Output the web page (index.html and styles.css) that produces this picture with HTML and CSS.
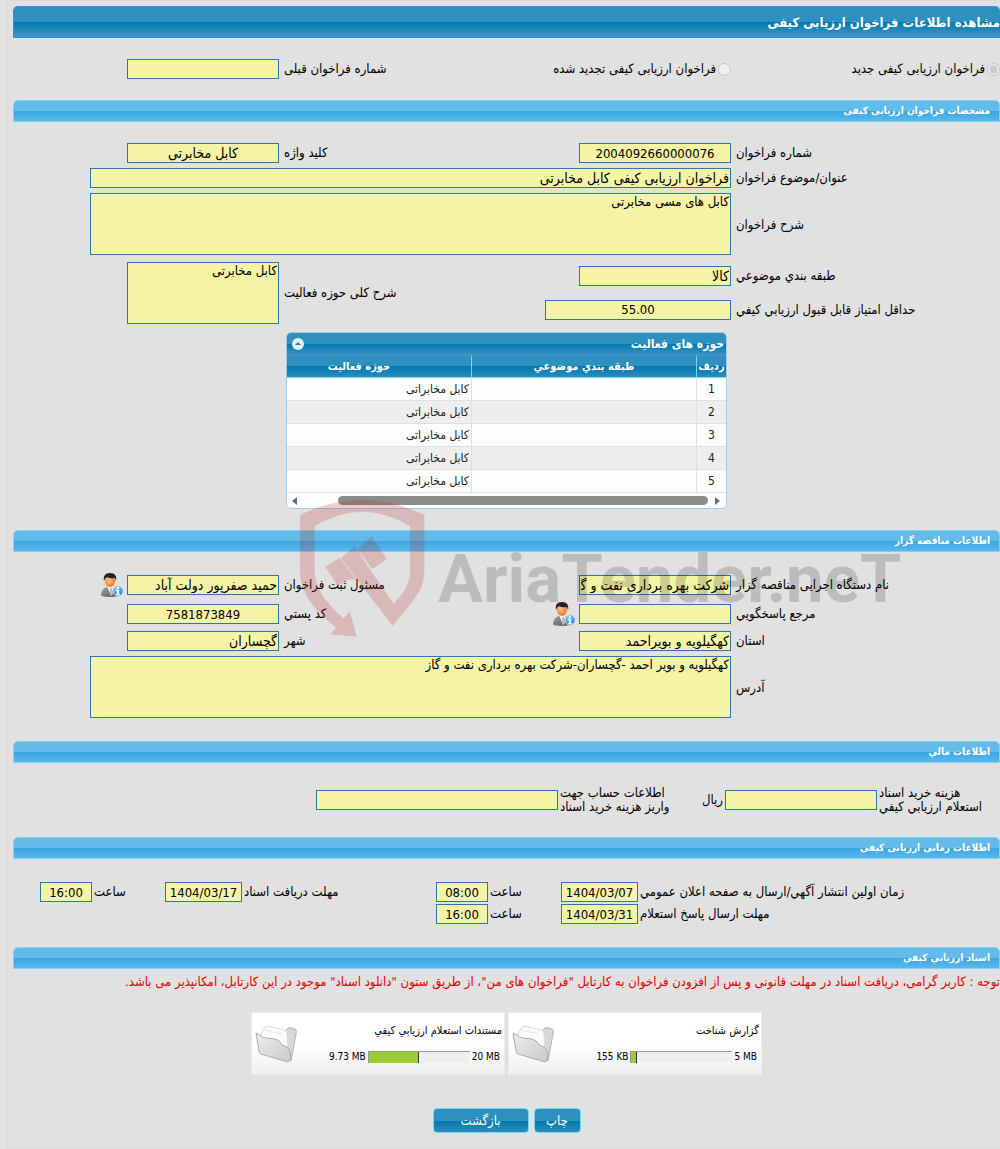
FILE: index.html
```html
<!DOCTYPE html>
<html lang="fa" dir="rtl">
<head>
    <meta charset="UTF-8">
    <meta name="viewport" content="width=device-width, initial-scale=1.0">
    <title>مشاهده اطلاعات فراخوان ارزیابی کیفی</title>
    <link rel="stylesheet" href="styles.css">
</head>
<body>
    <svg class="defs" width="0" height="0" aria-hidden="true">
        <defs>
            <linearGradient id="suit" x1="0" y1="0" x2="1" y2="1">
                <stop offset="0" stop-color="#a2a2a2"/>
                <stop offset="1" stop-color="#555"/>
            </linearGradient>
            <radialGradient id="skin" cx=".4" cy=".4" r=".7">
                <stop offset="0" stop-color="#ffc27a"/>
                <stop offset="1" stop-color="#ef6c1f"/>
            </radialGradient>
            <radialGradient id="info" cx=".4" cy=".3" r=".8">
                <stop offset="0" stop-color="#8fd0fa"/>
                <stop offset="1" stop-color="#1773cf"/>
            </radialGradient>
            <linearGradient id="folderFront" x1="0" y1="0" x2="1" y2="1">
                <stop offset="0" stop-color="#ededed"/>
                <stop offset="1" stop-color="#cacaca"/>
            </linearGradient>
            <symbol id="person" viewBox="0 0 22 24">
                <path d="M0 23c0-5 2-8 6-9h6c3 1 5 4 5 9q-8 2-17 0z" fill="url(#suit)"/>
                <path d="M6 13l4 10 3-10z" fill="#f4f4f4"/>
                <path d="M9 15h2l1 6-2 2-1-2z" fill="#bbb"/>
                <ellipse cx="9" cy="8" rx="5" ry="6" fill="url(#skin)"/>
                <path d="M3 8C2 3 4 0 9 0c5 0 7 3 6 8l-1-3q-5 1-8-1-2 1-3 4z" fill="#222"/>
                <circle cx="17" cy="18" r="5" fill="url(#info)" stroke="#b4dcf7"/>
                <path d="M16 14h2v2h-2zM15 17h3v4h1v1h-4v-1h1v-3h-1z" fill="#fff"/>
            </symbol>
            <symbol id="folder" viewBox="0 0 42 38">
                <path d="M27 9l6-6q2-1 3 0l4 1q2 1 1 5l-5 27-6-2z" fill="#d8d8d8" stroke="#b0b0b0"/>
                <path d="M6 10L9 3l3-2 17 4q3 1 3 4l1 14-3 9L7 25z" fill="#fcfcfc" stroke="#dadada"/>
                <path d="M9 5l18 4" stroke="#e6e6e6" fill="none"/>
                <path d="M1 8l4 2q2 3 6 3l9 1q5 1 7 6 6 1 8 6 1 3 0 9l-2 2-27-8q-2-1-2-3z" fill="url(#folderFront)" stroke="#ababab"/>
            </symbol>
        </defs>
    </svg>

    <main class="page">
        <h1 class="page-title">مشاهده اطلاعات فراخوان ارزیابی کیفی</h1>

        <div class="form-grid top-row">
            <label class="radio"><input type="radio" name="callType" checked disabled>فراخوان ارزیابی کیفی جدید</label>
            <label class="radio"><input type="radio" name="callType" disabled>فراخوان ارزیابی کیفی تجدید شده</label>
            <label for="prevNo">شماره فراخوان قبلی</label>
            <input class="field" id="prevNo" type="text" readonly>
        </div>

        <section class="section activities">
            <h2 class="bar">مشخصات فراخوان ارزیابی کیفی</h2>
            <div class="form-grid">
                <label for="callNo">شماره فراخوان</label>
                <input class="field number" id="callNo" type="text" value="2004092660000076" readonly>
                <label for="keyword">کلید واژه</label>
                <input class="field center" id="keyword" type="text" value="کابل مخابرتی" readonly>

                <label for="subject">عنوان/موضوع فراخوان</label>
                <input class="field wide" id="subject" type="text" value="فراخوان ارزیابی کیفی کابل مخابرتی" readonly>

                <label class="row-start" for="description">شرح فراخوان</label>
                <textarea class="field area wide" id="description" readonly>کابل های مسی مخابرتی</textarea>

                <label class="row-start" for="category">طبقه بندي موضوعي</label>
                <input class="field" id="category" type="text" value="کالا" readonly>
                <label class="tall" for="scope">شرح کلی حوزه فعالیت</label>
                <textarea class="field area tall" id="scope" readonly>کابل مخابرتی</textarea>
                <label for="minScore">حداقل امتياز قابل قبول ارزيابي كيفي</label>
                <input class="field score number" id="minScore" type="text" value="55.00" readonly>
            </div>

            <div class="panel">
                <div class="panel-title">
                    <span>حوزه های فعالیت</span>
                    <button type="button" class="collapse" aria-label="بستن">
                        <svg viewBox="0 0 12 12" width="12" height="12"><circle cx="6" cy="6" r="6" fill="#e4eefb"/><path d="M3 7l3-3 3 3z" fill="#2779aa"/></svg>
                    </button>
                </div>
                <table class="grid">
                    <thead>
                        <tr><th class="col-no">ردیف</th><th class="col-category">طبقه بندي موضوعي</th><th>حوزه فعاليت</th></tr>
                    </thead>
                    <tbody>
                        <tr><td>1</td><td></td><td>کابل مخابراتی</td></tr>
                        <tr><td>2</td><td></td><td>کابل مخابراتی</td></tr>
                        <tr><td>3</td><td></td><td>کابل مخابراتی</td></tr>
                        <tr><td>4</td><td></td><td>کابل مخابراتی</td></tr>
                        <tr><td>5</td><td></td><td>کابل مخابراتی</td></tr>
                    </tbody>
                </table>
                <div class="scrollbar">
                    <svg viewBox="0 0 5 8" width="5" height="8"><path d="M0 0l5 4-5 4z" fill="#6d6d6d"/></svg>
                    <div class="thumb"></div>
                    <svg viewBox="0 0 5 8" width="5" height="8"><path d="M5 0L0 4l5 4z" fill="#6d6d6d"/></svg>
                </div>
            </div>
        </section>

        <section class="section organizer">
            <h2 class="bar">اطلاعات مناقصه گزار</h2>
            <div class="form-grid people">
                <label for="agency">نام دستگاه اجرایی مناقصه گزار</label>
                <input class="field" id="agency" type="text" value="شرکت بهره برداری نفت و گاز گچساران" readonly>
                <label for="registrar">مسئول ثبت فراخوان</label>
                <div class="with-icon">
                    <input class="field" id="registrar" type="text" value="حمید صفرپور دولت آباد" readonly>
                    <button type="button" class="person" aria-label="مشخصات مسئول"><svg width="22" height="24"><use href="#person"/></svg></button>
                </div>

                <label for="contact">مرجع پاسخگويي</label>
                <div class="with-icon">
                    <input class="field" id="contact" type="text" readonly>
                    <button type="button" class="person" aria-label="مشخصات مرجع"><svg width="22" height="24"><use href="#person"/></svg></button>
                </div>
                <label for="postcode">كد پستي</label>
                <input class="field number" id="postcode" type="text" value="7581873849" readonly>

                <label for="province">استان</label>
                <input class="field" id="province" type="text" value="کهگیلویه و بویراحمد" readonly>
                <label for="city">شهر</label>
                <input class="field" id="city" type="text" value="گچساران" readonly>

                <label for="address">آدرس</label>
                <textarea class="field area wide" id="address" readonly>کهگیلویه و بویر احمد -گچساران-شرکت بهره برداری نفت و گاز</textarea>
            </div>

            <svg class="watermark" viewBox="0 0 610 140" width="610" height="140">
                <g fill="#b9282f" fill-opacity=".22" transform="scale(.3333) translate(-60 -27)">
                    <path d="M60 75Q246-15 433 75V240C433 300 404 328 338 407L230 268 183 205 225 168 273 243 342 342C376 302 390 282 390 240V108Q246 22 104 108V240C104 300 142 340 190 385L210 365 230 440 152 433 168 412C104 362 60 310 60 240Z"/>
                    <path d="M136 230L179 203 229 270 215 268Q186 272 175 290Z"/>
                    <path d="M233 178L275 138 320 208 276 237Z"/>
                </g>
                <text x="138" y="103">AriaTender.neT</text>
            </svg>
        </section>

        <section class="section">
            <h2 class="bar">اطلاعات مالي</h2>
            <div class="money-grid">
                <label for="cost">هزینه خرید اسناد<br>استعلام ارزيابي كيفي</label>
                <input class="field" id="cost" type="text" readonly>
                <span>ریال</span>
                <label for="account">اطلاعات حساب جهت<br>واریز هزینه خرید اسناد</label>
                <input class="field" id="account" type="text" readonly>
            </div>
        </section>

        <section class="section">
            <h2 class="bar">اطلاعات زمانی ارزیابی کیفی</h2>
            <div class="time-grid">
                <label for="publishDate">زمان اولین انتشار آگهي/ارسال به صفحه اعلان عمومي</label>
                <input class="field number" id="publishDate" type="text" value="1404/03/07" readonly>
                <label for="publishHour">ساعت</label>
                <input class="field number" id="publishHour" type="text" value="08:00" readonly>
                <label for="receiveDate">مهلت دریافت اسناد</label>
                <input class="field number" id="receiveDate" type="text" value="1404/03/17" readonly>
                <label for="receiveHour">ساعت</label>
                <input class="field number" id="receiveHour" type="text" value="16:00" readonly>

                <label class="row-start" for="replyDate">مهلت ارسال پاسخ استعلام</label>
                <input class="field number" id="replyDate" type="text" value="1404/03/31" readonly>
                <label for="replyHour">ساعت</label>
                <input class="field number" id="replyHour" type="text" value="16:00" readonly>
            </div>
        </section>

        <section>
            <h2 class="bar">اسناد ارزيابي كيفي</h2>
            <p class="note">توجه : کاربر گرامی، دریافت اسناد در مهلت قانونی و پس از افزودن فراخوان به کارتابل "فراخوان های من"، از طریق ستون "دانلود اسناد" موجود در این کارتابل، امکانپذیر می باشد.</p>
            <div class="files">
                <div class="file">
                    <svg width="42" height="38"><use href="#folder"/></svg>
                    <div class="file-info">
                        <a href="#">گزارش شناخت</a>
                        <div class="usage">
                            <span>155 KB</span>
                            <div class="track"><div class="fill" style="width: 5%"></div></div>
                            <span class="limit">5 MB</span>
                        </div>
                    </div>
                </div>
                <div class="file">
                    <svg width="42" height="38"><use href="#folder"/></svg>
                    <div class="file-info">
                        <a href="#">مستندات استعلام ارزيابي كيفي</a>
                        <div class="usage">
                            <span>9.73 MB</span>
                            <div class="track"><div class="fill" style="width: 50%"></div></div>
                            <span class="limit">20 MB</span>
                        </div>
                    </div>
                </div>
            </div>
            <div class="actions">
                <button type="button" class="btn">چاپ</button>
                <button type="button" class="btn btn-wide">بازگشت</button>
            </div>
        </section>
    </main>
</body>
</html>
```
FILE: styles.css
```css
* {
    box-sizing: border-box;
}
body {
    margin: 0;
    background: #e2e2e2;
    color: #000;
    font-family: "DejaVu Sans Condensed", "DejaVu Sans", sans-serif;
    font-size: 13px;
    line-height: 14px;
    overflow-x: hidden;
}
h1, h2, p {
    margin: 0;
}
button {
    font-family: inherit;
    cursor: pointer;
}
.defs {
    position: absolute;
}
.page {
    margin-left: 7px;
    padding: 5px 0 15px 5px;
    border: 1px solid #dadada;
    border-right: 0;
    background: #e1e1e1;
}

/* title bars */
.page-title {
    height: 32px;
    border: 1px solid #2694e8;
    border-right: 0;
    border-radius: 5px 5px 0 0;
    background: linear-gradient(#2e90be 0 50%, #0078ae 50%, #4297c5);
    color: #fff;
    font-size: 13px;
    line-height: 32px;
}
.bar {
    height: 22px;
    padding: 0 9px;
    border: 1px solid #77d5f7;
    border-radius: 5px 5px 0 0;
    background: linear-gradient(#62bbe8 0 50%, #38a5e0 50%, #5cb8ea);
    color: #fff;
    font-size: 10px;
    line-height: 20px;
}

/* form rows */
.section {
    padding-bottom: 23px;
}
.activities, .organizer {
    padding-bottom: 21px;
}
.form-grid {
    display: grid;
    grid-template-columns: 264fr 186fr 256fr 266fr;
    gap: 5px;
    align-items: center;
    padding-top: 21px;
}
.top-row {
    padding-bottom: 21px;
}
label {
    text-align: left;
    white-space: nowrap;
}
.radio {
    display: flex;
    align-items: center;
    gap: 2px;
    text-align: right;
}
.radio input {
    width: 13px;
    height: 13px;
    margin: 0;
}
.field {
    width: 152px;
    height: 20px;
    padding: 0 1px;
    border: 1px solid #2779aa;
    border-radius: 0;
    background: #f5f3a6;
    color: #000;
    font-family: inherit;
    font-size: 14px;
    outline: none;
}
.center, .number {
    text-align: center;
}
.number {
    font-size: 13px;
}
.wide {
    grid-column: 2 / 5;
    width: 641px;
}
.area {
    display: block;
    height: 62px;
    font-size: 13px;
    line-height: 16px;
    resize: none;
}
.area.wide {
    margin-bottom: 2px;
}
.row-start {
    grid-column: 1;
}
.tall {
    grid-row: 4 / 6;
}
label.tall {
    grid-column: 3;
}
.area.tall {
    grid-column: 4;
}
.score {
    width: 186px;
}
.people {
    grid-template-rows: 24px 24px;
}
.with-icon {
    display: flex;
    align-items: center;
    gap: 4px;
}
.person {
    height: 24px;
    padding: 0;
    border: 0;
    background: none;
}

/* activity table */
.panel {
    width: 441px;
    margin: 8px auto 0;
    border: 1px solid #a6c9e2;
    border-radius: 5px;
    background: #fcfdfd;
    overflow: hidden;
}
.panel-title {
    display: flex;
    justify-content: space-between;
    align-items: center;
    height: 22px;
    padding: 0 4px 0 5px;
    padding-right: 2px;
    background: linear-gradient(#2e90be 0 50%, #0078ae 50%, #3b93c1);
    color: #fff;
    font-size: 12px;
    font-weight: bold;
}
.collapse {
    display: flex;
    padding: 0;
    border: 0;
    background: none;
}
.grid {
    width: 100%;
    border-collapse: separate;
    border-spacing: 0;
    table-layout: fixed;
    color: #222;
    font-size: 12px;
}
.grid th {
    height: 23px;
    padding: 0;
    border-top: 1px solid #4297d7;
    border-bottom: 1px solid #77d5f7;
    border-left: 1px solid #77d5f7;
    background: linear-gradient(#2e90be 0 50%, #0078ae 50%, #2e8bbb);
    color: #fff;
    font-size: 11px;
}
.grid th:last-child, .grid td:last-child {
    border-left: 0;
}
.grid .col-no {
    width: 30px;
}
.grid .col-category {
    width: 225px;
}
.grid th:last-child {
    padding-right: 40px;
}
.grid td {
    height: 23px;
    padding: 0 2px;
    border-bottom: 1px solid #e0e0e0;
    border-left: 1px solid #e0e0e0;
    background: #fcfdfd;
}
.grid td:first-child {
    text-align: center;
}
.grid tr:nth-child(even) td {
    background: #eee;
}
.scrollbar {
    display: flex;
    align-items: center;
    justify-content: space-between;
    height: 15px;
    padding: 0 6px 0 5px;
}
.thumb {
    width: 370px;
    height: 9px;
    margin-right: 7px;
    margin-left: auto;
    border-radius: 5px;
    background: #8b8b8b;
}

/* logo laid over the organizer block */
.organizer {
    position: relative;
}
.watermark {
    position: absolute;
    top: -31px;
    left: 287px;
    direction: ltr;
    pointer-events: none;
}
.watermark text {
    fill: #000;
    fill-opacity: .16;
    font-family: Roboto, "Liberation Sans", sans-serif;
    font-size: 67px;
    font-weight: bold;
}

/* financial and date rows */
.money-grid {
    display: grid;
    grid-template-columns: 121px 152px 30px 131px 242px;
    gap: 2px;
    align-items: center;
    padding-top: 23px;
}
.money-grid .field, .time-grid .field {
    width: 100%;
}
.time-grid {
    display: grid;
    grid-template-columns: 360px 77px 69px 52px 190px 77px 69px 52px;
    gap: 2px;
    align-items: center;
    padding-top: 23px;
}

/* documents */
.note {
    color: #e00000;
    line-height: 26px;
    white-space: nowrap;
}
.files {
    display: flex;
    justify-content: center;
    gap: 3px;
    padding-top: 17px;
}
.file {
    display: flex;
    align-items: center;
    justify-content: space-between;
    direction: ltr;
    width: 254px;
    height: 63px;
    padding: 0 2px 0 3px;
    border: 1px solid #ececec;
    background: linear-gradient(#fff 50%, #f0f0f0);
    font-size: 10px;
}
.file-info {
    display: flex;
    flex-direction: column;
    align-items: flex-end;
    gap: 12px;
}
.file-info a {
    direction: rtl;
    color: #000;
    font-size: 11px;
    text-decoration: none;
}
.usage {
    display: flex;
    align-items: center;
    gap: 2px;
}
.track {
    width: 102px;
    height: 12px;
    border-top: 1px solid #999;
    border-left: 1px solid #999;
    background: #eee;
}
.fill {
    height: 11px;
    border-right: 1px solid #333;
    background: #9acd32;
}
.limit {
    padding-right: 2px;
}
.actions {
    display: flex;
    justify-content: center;
    gap: 5px;
    padding-top: 33px;
}
.btn {
    width: 47px;
    height: 25px;
    padding: 0;
    border: 1px solid #77d5f7;
    border-radius: 4px;
    background: linear-gradient(#2e90be 0 50%, #0078ae 50%, #2e8bbb);
    color: #fff;
    font-size: 13px;
}
.btn-wide {
    width: 96px;
}
```
